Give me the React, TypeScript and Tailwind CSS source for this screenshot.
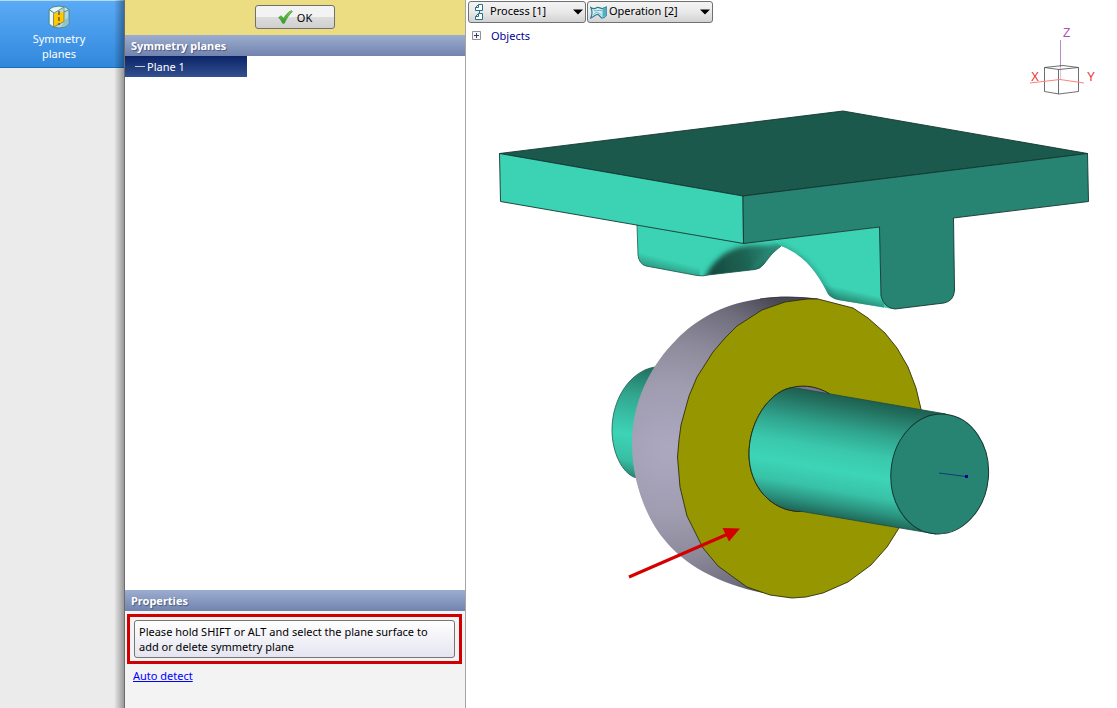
import type { ReactNode } from "react";

function SymmetryIcon() {
  return (
    <svg width="22" height="24" viewBox="0 0 22 24" aria-hidden="true">
      <path d="M1 4.500 Q4 1 11 1 Q18 1 21 4.500 V19 Q18 23 11 23 Q4 23 1 19 Z" fill="#b3d9da" stroke="#4d8b96" />
      <path d="M2 6 L6 8 V21 Q3 20 2 18.500 Z" fill="#edf8f6" />
      <path d="M2 4.500 Q5 2 11 2 L15 2.500 L6 7.500 Z" fill="#e9f6f4" />
      <path d="M15.500 2 L20 4.500 L16 7 Z" fill="#d0e9e8" />
      <path d="M17 15 L20 12 V18.500 Q18 21 13 22 Z" fill="#8fc3c6" />
      <path d="M1 4.500 L6 8 M16 7 L21 4.500" fill="none" stroke="#4d8b96" />
      <path d="M5.500 8.500 L16 7 V16.500 L5.500 22 Z" fill="#ffc800" />
      <path d="M5.500 8.500 L16 2 V16.500 L5.500 22 Z" fill="none" stroke="#6f7a5c" strokeWidth="0.800" />
      <path d="M11 6 V20" stroke="#4c4528" strokeWidth="1.200" strokeDasharray="4 2" />
    </svg>
  );
}

function CheckIcon() {
  return (
    <svg width="15" height="14" viewBox="0 0 15 14" aria-hidden="true">
      <defs>
        <linearGradient id="check" x1="0" y1="0" x2="0" y2="1">
          <stop offset="0" stopColor="#7fd04e" />
          <stop offset="1" stopColor="#2b9a24" />
        </linearGradient>
      </defs>
      <path
        d="M0.600 7.500 L3.200 5.800 L5.600 8.600 C7.500 5 10 2 13.600 0.600 L14.400 1.600 C11 4.600 8.500 8.500 6.400 13.300 H4.600 C3.600 11 2.200 9 0.600 7.500 Z"
        fill="url(#check)"
        stroke="#4a9a3c"
        strokeWidth="0.700"
      />
    </svg>
  );
}

function ProcessIcon() {
  return (
    <svg width="10" height="16" viewBox="0 0 10 16" aria-hidden="true" fill="#fff" stroke="#2a7288">
      <path d="M4.500 0.500 H8.500 V6.500 H1.500 V3.500 Z" />
      <path d="M4.500 9.500 H8.500 V15.500 H1.500 V12.500 Z" />
      <path d="M4.500 0.500 V3.500 H1.500 M4.500 9.500 V12.500 H1.500 M5.500 6.500 V9" fill="none" />
    </svg>
  );
}

function OperationIcon() {
  return (
    <svg width="17" height="13" viewBox="0 0 17 13" aria-hidden="true">
      <path
        d="M0.800 1.500 C3 3 5 3 7 1.500 C9 0.500 10.500 3 12.500 2.500 C14 2.300 15 1.500 16.200 1 V9.500 C15 11 14 12 12.500 12 C10.500 12.500 9.500 8 7 8.500 C5 9 3.500 11 0.800 12 C2.500 8 2.500 5 0.800 1.500 Z"
        fill="#d5f0f3"
        stroke="#2a7f96"
        strokeWidth="1.200"
      />
      <path d="M12.500 3 L16 1.500 V9.500 L12.500 11.500 Z" fill="#4fb0c4" />
      <path d="M4 4.500 C7 5.500 9 3.500 12 5 M3.500 8.500 C6 5.500 8.500 6.500 11.500 9" fill="none" stroke="#5f9fb0" strokeWidth="0.800" />
    </svg>
  );
}

function SectionHeader({ children }: { children: ReactNode }) {
  return (
    <h2 className="flex h-[21px] shrink-0 items-center bg-linear-to-b from-[#9dadd0] to-[#7284ae] px-1.5 text-[11px] font-bold text-white [text-shadow:1px_1px_1px_#4a5a85]">
      {children}
    </h2>
  );
}

function ToolbarSelect({ label, value, icon, wide }: { label: string; value: string; icon: ReactNode; wide?: boolean }) {
  return (
    <label className={`grid items-center ${wide ? "w-[126px]" : "w-[118px]"}`}>
      <select
        aria-label={label}
        className={`col-start-1 row-start-1 h-[22px] w-full appearance-none rounded-[3px] border border-[#707070] bg-linear-to-b from-[#f4f4f4] via-[#e9e9e9] to-[#d2d2d2] pr-4 pb-0.5 leading-[18px] text-black ${wide ? "pl-[21px]" : "pl-[21px]"}`}
      >
        <option>{value}</option>
      </select>
      <span className={`pointer-events-none col-start-1 row-start-1 flex items-center justify-between pr-[3px] ${wide ? "pl-[3px]" : "pl-1.5"}`}>
        {icon}
        <svg width="10" height="6" viewBox="0 0 10 6" aria-hidden="true">
          <path d="M0 0.500 H10 L5 5.500 Z" fill="#000" />
        </svg>
      </span>
    </label>
  );
}

function AxisTriad() {
  return (
    <svg width="87" height="75" viewBox="1030 24 87 75" className="shrink-0 overflow-visible font-['Liberation_Sans',sans-serif] text-xs" role="img" aria-label="Axes">
      <g fill="none" strokeWidth="1">
        <path d="M1060.500 40 V67" stroke="#b78ccc" />
        <path d="M1060.500 67 V80" stroke="#dcc6e6" />
        <path d="M1044.500 67.500 L1063 65.500 L1078.500 67.500 L1059 69.500 Z M1044.500 67.500 V91.500 L1059 94 L1078.500 91.500 V67.500 M1058.500 69.500 V94" stroke="#4a4a4a" strokeWidth="0.800" />
        <path d="M1030 83 L1060 79.500 L1084 83" stroke="#ff7f7f" />
      </g>
      <text x="1063" y="37" fill="#b04fb5">Z</text>
      <text x="1031" y="81" fill="#f03030">X</text>
      <text x="1087" y="81" fill="#f03030">Y</text>
    </svg>
  );
}

const facePoints =
  "677.5,457 679,440 681,425 689,396 697,377 713,352 725,338 737,326 762,310 785,302 807,299 818,299 853,308 868,318 885,333 897,348 908,367 916,388 921,409 923,460 914,500 899,528 887,547 871,565 848,582 823,593 806,597 792,598 770,595 747,587 718,566 703,548 687,516 680,487";

const backLug =
  "M637 225 L638 255 Q639 264 646 266 L697 275.500 Q703 276.500 708 275 L755 269.500 Q760 269 764 264 Q772 252 781 246 L790 238 L743 243 Z";

const frontLug =
  "M774 240 L880 227 L881 296 Q884 307 893 309 L838 300 Q831 298 828 294 C818 274 805 255 781 246 Z";

function Scene() {
  return (
    <svg viewBox="466 99 651 609" preserveAspectRatio="xMidYMin meet" className="min-h-0 w-full flex-1" role="img" aria-label="Die, workpiece and mandrel">
      <defs>
        <radialGradient id="sphere" gradientUnits="userSpaceOnUse" cx="668" cy="450" r="184">
          <stop offset="0" stopColor="#aba8c1" />
          <stop offset="0.350" stopColor="#a09db1" />
          <stop offset="0.600" stopColor="#8b8999" />
          <stop offset="0.820" stopColor="#6f6d7c" />
          <stop offset="1" stopColor="#494855" />
        </radialGradient>
        <linearGradient id="shaft" gradientUnits="userSpaceOnUse" x1="864" y1="399" x2="843" y2="519">
          <stop offset="0" stopColor="#1d5e50" />
          <stop offset="0.080" stopColor="#23705f" />
          <stop offset="0.280" stopColor="#30a68f" />
          <stop offset="0.450" stopColor="#3ac8ac" />
          <stop offset="0.620" stopColor="#3dd5b7" />
          <stop offset="0.780" stopColor="#38c2a7" />
          <stop offset="0.900" stopColor="#2b9480" />
          <stop offset="1" stopColor="#1f6656" />
        </linearGradient>
        <linearGradient id="shaftEnd" gradientUnits="userSpaceOnUse" x1="640" y1="366" x2="621" y2="480">
          <stop offset="0" stopColor="#227060" />
          <stop offset="0.250" stopColor="#31a58e" />
          <stop offset="0.600" stopColor="#3dd4b6" />
          <stop offset="0.820" stopColor="#38bea4" />
          <stop offset="1" stopColor="#257664" />
        </linearGradient>
        <linearGradient id="lugEdge" gradientUnits="userSpaceOnUse" x1="674" y1="261" x2="671" y2="273">
          <stop offset="0" stopColor="#207560" stopOpacity="0" />
          <stop offset="1" stopColor="#207560" stopOpacity="0.600" />
        </linearGradient>
        <linearGradient id="frontEdge" gradientUnits="userSpaceOnUse" x1="860" y1="292" x2="857" y2="305">
          <stop offset="0" stopColor="#207560" stopOpacity="0" />
          <stop offset="1" stopColor="#207560" stopOpacity="0.850" />
        </linearGradient>
        <linearGradient id="arch" gradientUnits="userSpaceOnUse" x1="712" y1="270" x2="768" y2="252">
          <stop offset="0" stopColor="#174b40" />
          <stop offset="0.600" stopColor="#1d6454" />
          <stop offset="1" stopColor="#278270" />
        </linearGradient>
        <clipPath id="backLugClip">
          <path d={backLug} />
        </clipPath>
        <clipPath id="frontLugClip">
          <path d={frontLug} />
        </clipPath>
        <filter id="soft" x="-20%" y="-20%" width="140%" height="140%">
          <feGaussianBlur stdDeviation="2.500" />
        </filter>
      </defs>

      <g strokeLinejoin="round">
        <path d={backLug} fill="#3cd2b4" />
        <g clipPath="url(#backLugClip)">
          <path d="M636 250 H700 V280 H636 Z" fill="url(#lugEdge)" />
          <path d="M704 280 C710 264 724 249 746 246 C758 244 772 247 784 244 L764 280 Z" fill="url(#arch)" filter="url(#soft)" />
          <path d="M748 280 C755 263 765 252 782 244" fill="none" stroke="#2e927e" strokeWidth="3" opacity="0.600" filter="url(#soft)" />
        </g>
        <path d="M637 225 L638 255 Q639 264 646 266 L697 275.500 Q703 276.500 708 275 L755 269.500 Q760 269 764 264 Q772 252 781 246" fill="none" stroke="#1c5a4d" strokeWidth="0.800" />
        <path d={frontLug} fill="#3cd2b4" />
        <g clipPath="url(#frontLugClip)">
          <path d="M820 284 L884 294 V312 H820 Z" fill="url(#frontEdge)" />
          <path d="M834 303 C817 273 804 256 778 246" fill="none" stroke="#1d6b5a" strokeWidth="4" opacity="0.600" filter="url(#soft)" />
        </g>
        <g stroke="#12372f" strokeWidth="0.900">
          <path d="M499.500 153.500 L843 111 L1087.500 153.500 L743 196 Z" fill="#1b594d" />
          <path d="M499.500 153.500 L743 196 L743.500 243.500 L500.500 201.500 Z" fill="#3cd2b4" />
          <path d="M743 196 L1087.500 153.500 L1088.500 201.500 L953.500 218 L954.500 290 Q954 301 944 303 L895 309 Q884 308 881 296 L879.500 227 L743.500 243.500 Z" fill="#288472" />
        </g>
      </g>

      <path d="M655 367 C630 371 612 399 612 430 C612 452 622 473 635 477.500 L672 470 L690 380 Z" fill="url(#shaftEnd)" stroke="#1d5b4e" strokeWidth="0.800" />
      <path
        d="M818 299 C790 295 762 297 743 302 C710 310 690 326 677 339 C650 366 632 402 632 443 C632 490 652 525 663 538 C688 570 730 590 792 598 L810 450 Z"
        fill="url(#sphere)"
      />
      <path d="M760 299 C780 296 800 297 818 299" fill="none" stroke="#34333e" strokeWidth="0.800" />
      <polygon points={facePoints} fill="#969600" stroke="#30300c" strokeWidth="0.900" />
      <path
        d="M830 394 C815 385 800 384 785 389.500 C765 398 749 425 749 454 C749 486 771 511 800 511.500 L840 505 Z"
        fill="#777587"
        stroke="#252510"
      />
      <path d="M793 387.500 L946 414 L936 534 L799 511 C771 510 749 486 749 454 C749 425 765 397 785 389.500 Q789 388 793 387.500 Z" fill="url(#shaft)" />
      <path d="M793 387.500 L946 414 M799 511 L936 534" stroke="#1a4d42" strokeWidth="0.800" />
      <path d="M793 387.500 Q789 388 785 389.500 C765 398 749 425 749 454 C749 486 771 511 800 511.500" fill="none" stroke="#23341f" />
      <ellipse cx="939.700" cy="474" rx="48.800" ry="60" transform="rotate(5 939.700 474)" fill="#288472" stroke="#12372f" />
      <path d="M939 473 L966 476.500" stroke="#0c3a83" />
      <path d="M965 475 H968 V478 H965 Z" fill="#000091" />
      <path d="M629 577 L728 534" stroke="#d40000" strokeWidth="3" />
      <path d="M740 528.500 L722.500 528 L729 541.500 Z" fill="#d40000" />
    </svg>
  );
}

export default function App() {
  return (
    <div className="flex h-screen min-h-[400px] overflow-hidden bg-white font-['Noto_Sans','Open_Sans',sans-serif] text-[11px] leading-[15px] text-black">
      <nav className="flex w-[125px] shrink-0 border-r border-[#6c6c6c] bg-[#ebebeb]">
        <div className="relative flex-1">
          <button className="flex h-[68px] w-full flex-col items-center border-t border-b border-t-[#b8dcf8] border-b-[#1c6ebb] bg-linear-to-b from-[#5aabf6] to-[#3088dc] px-6 pt-1 pr-[30px] text-white">
            <SymmetryIcon />
            <span className="mt-0.5">Symmetry planes</span>
          </button>
          <div className="pointer-events-none absolute inset-y-0 right-0 w-2.5 bg-linear-to-r from-transparent to-black/35" />
        </div>
      </nav>

      <aside className="flex w-[341px] shrink-0 flex-col border-r border-[#a5a5a5]">
        <div className="flex h-[35px] shrink-0 items-start justify-center bg-[#ecdc82] pt-[5px]">
          <button className="flex h-6 w-20 items-center justify-center gap-1 rounded-[3px] border border-[#707070] bg-linear-to-b from-[#f3f3f3] from-50% via-[#dddddd] via-50% to-[#cfcfcf]">
            <CheckIcon />
            OK
          </button>
        </div>
        <SectionHeader>Symmetry planes</SectionHeader>
        <ul className="flex-1 overflow-auto bg-white">
          <li>
            <button className="flex h-[21px] w-[122px] items-center gap-0.5 bg-linear-to-b from-[#0b2468] to-[#34508f] pl-2.5 text-white">
              <span className="h-px w-2.5 bg-[#c8c8c8]" />
              Plane 1
            </button>
          </li>
        </ul>
        <SectionHeader>Properties</SectionHeader>
        <section className="flex h-[97px] shrink-0 flex-col items-start bg-[#f3f3f3] pt-[3px] pr-[3px] pl-0.5">
          <div className="w-full border-3 border-[#d00000] px-1 py-[3px]">
            <p className="rounded-[3px] border border-[#767676] bg-linear-to-b from-white to-[#e4e5f0] py-[3px] pr-5 pl-1">
              Please hold SHIFT or ALT and select the plane surface to add or delete symmetry plane
            </p>
          </div>
          <a href="#auto-detect" className="mt-1 ml-1.5 text-[#0000ff] underline">
            Auto detect
          </a>
        </section>
      </aside>

      <main className="flex min-w-0 flex-1 flex-col">
        <div className="flex h-6 shrink-0 items-center gap-px pl-0.5">
          <ToolbarSelect label="Process" value="Process [1]" icon={<ProcessIcon />} />
          <ToolbarSelect label="Operation" value="Operation [2]" icon={<OperationIcon />} wide />
        </div>
        <div className="flex shrink-0 items-start justify-between pl-1.5">
          <button className="mt-1 flex items-center gap-2.5 text-[#00009b]">
            <svg width="9" height="9" viewBox="0 0 9 9" aria-hidden="true">
              <path d="M0.500 0.500 H8.500 V8.500 H0.500 Z" fill="#f6f6f6" stroke="#919191" />
              <path d="M2 4.500 H7 M4.500 2 V7" stroke="#2b3f78" />
            </svg>
            Objects
          </button>
          <AxisTriad />
        </div>
        <Scene />
      </main>
    </div>
  );
}
